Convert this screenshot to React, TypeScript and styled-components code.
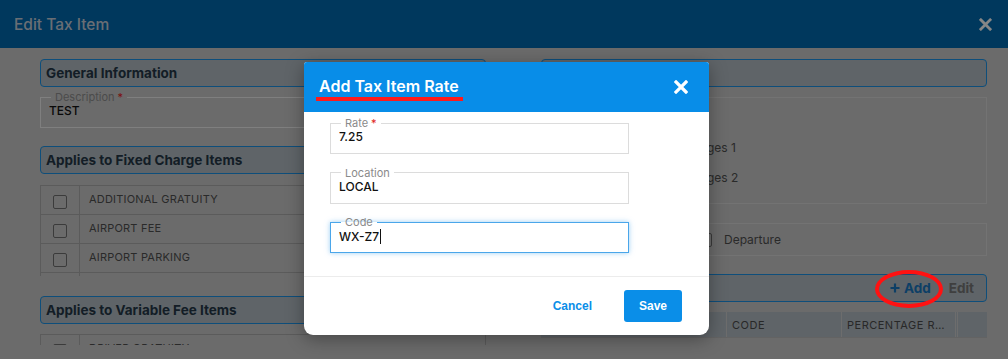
import React from "react";
import styled, { createGlobalStyle } from "styled-components";

const GlobalStyle = createGlobalStyle`
  html, body {
    margin: 0;
    padding: 0;
  }
  body {
    font-family: Inter, "Open Sans", sans-serif;
  }
  * {
    box-sizing: border-box;
  }
`;

const Page = styled.div`
  position: relative;
  width: 1008px;
  height: 359px;
  overflow: hidden;
  background: #c3c3c3;
`;

const TopBar = styled.header`
  height: 48px;
  background: #0066aa;
  display: flex;
  align-items: center;
  justify-content: space-between;
  padding: 0 16px 0 14px;
`;

const TopTitle = styled.h1`
  margin: 0;
  font-size: 15.5px;
  font-weight: 500;
  color: #c0c9d4;
`;

const CloseButton = styled.button<{ $size: number; $color?: string }>`
  border: 0;
  padding: 0;
  background: none;
  display: flex;
  width: ${({ $size }) => $size}px;
  height: ${({ $size }) => $size}px;
  color: ${({ $color }) => $color ?? "#ffffff"};
`;

const Content = styled.main`
  display: grid;
  grid-template-columns: 446px 446px;
  column-gap: 55px;
  padding: 11px 0 0 40px;
  height: 297px;
  overflow: hidden;
`;

const Column = styled.section`
  display: flex;
  flex-direction: column;
`;

const SectionHeader = styled.div<{ $top?: number }>`
  flex: none;
  height: 28px;
  margin-top: ${({ $top }) => $top ?? 0}px;
  border: 1.5px solid #1a8fe0;
  border-radius: 4px;
  background: #adb6bd;
  display: flex;
  align-items: center;
  justify-content: space-between;
  padding: 0 12px 0 5px;
  font-size: 13.5px;
  font-weight: 700;
  color: #243646;
`;

const HeaderActions = styled.div`
  display: flex;
  align-items: center;
  gap: 18px;
`;

const Action = styled.span<{ $primary?: boolean }>`
  display: flex;
  align-items: center;
  gap: 4px;
  font-size: 13.5px;
  font-weight: 700;
  color: ${({ $primary }) => ($primary ? "#1873ba" : "#737373")};
`;

const Field = styled.fieldset<{ $top?: number; $focus?: boolean; $bg?: string }>`
  flex: none;
  margin: ${({ $top }) => $top ?? 0}px 0 0;
  padding: 0 8px;
  height: 37px;
  min-width: 0;
  border: 1px solid ${({ $focus }) => ($focus ? "#4aa6ea" : "#dcdcdc")};
  box-shadow: ${({ $focus }) =>
    $focus ? "0 0 5px rgba(74, 166, 234, 0.55)" : "none"};
  background: ${({ $bg }) => $bg ?? "transparent"};
`;

const Legend = styled.legend`
  padding: 0 4px;
  margin-left: 2px;
  font-size: 11px;
  line-height: 12px;
  color: #8a8a8a;
`;

const Required = styled.span`
  color: #e01b1b;
  margin-left: 3px;
`;

const Value = styled.div`
  display: flex;
  align-items: center;
  font-size: 12px;
  line-height: 14px;
  font-weight: 500;
  color: #111111;
  margin-top: 1px;
`;

const Caret = styled.span`
  display: inline-block;
  width: 1px;
  height: 15px;
  margin-left: 1px;
  background: #111111;
`;

const Table = styled.div<{ $top?: number; $height: number }>`
  flex: none;
  margin-top: ${({ $top }) => $top ?? 0}px;
  height: ${({ $height }) => $height}px;
  overflow: hidden;
  border-left: 1px solid #a6a6a6;
  border-right: 1px solid #a6a6a6;
  border-top: 1px solid #a6a6a6;
`;

const Row = styled.div`
  display: grid;
  grid-template-columns: 39px 1fr;
  height: 29px;
  border-bottom: 1px solid #a6a6a6;
`;

const CheckCell = styled.div`
  display: flex;
  align-items: center;
  justify-content: center;
  border-right: 1px solid #a6a6a6;
  padding-top: 3px;
`;

const TextCell = styled.div`
  display: flex;
  align-items: center;
  padding: 0 0 2px 9px;
  font-size: 11px;
  color: #4e4e4e;
  letter-spacing: 0.2px;
`;

const Checkbox = styled.span`
  display: inline-block;
  flex: none;
  width: 14px;
  height: 14px;
  border: 1.5px solid #6c6c6c;
  border-radius: 2px;
`;

const Box = styled.div<{ $top?: number; $height: number }>`
  flex: none;
  margin-top: ${({ $top }) => $top ?? 0}px;
  height: ${({ $height }) => $height}px;
  border: 1px solid #d2d2d2;
  display: flex;
  flex-direction: column;
`;

const CheckRow = styled.label<{ $indent: number; $height: number }>`
  display: flex;
  align-items: center;
  gap: 12px;
  height: ${({ $height }) => $height}px;
  padding-left: ${({ $indent }) => $indent}px;
  font-size: 12px;
  color: #4e4e4e;
`;

const GridHead = styled.div`
  flex: none;
  margin-top: 10px;
  height: 26px;
  display: grid;
  grid-template-columns: 185px 115px 114px 1fr;
  background: #adb6bd;
  border-bottom: 1px solid #b4b4b4;
`;

const GridCell = styled.div<{ $double?: boolean }>`
  display: flex;
  align-items: center;
  padding: 0 4px 0 5px;
  font-size: 11px;
  letter-spacing: 0.5px;
  color: #4a4a4a;
  border-left: ${({ $double }) => ($double ? "3px double" : "1px solid")} #c6c6c6;
  white-space: nowrap;
  overflow: hidden;

  span {
    overflow: hidden;
    text-overflow: ellipsis;
  }

  &:first-child {
    border-left: 0;
  }
`;

const Overlay = styled.div`
  position: absolute;
  inset: 0;
  background: rgba(0, 0, 0, 0.45);
  z-index: 1;
`;

const Modal = styled.div`
  position: absolute;
  left: 304px;
  top: 62px;
  width: 405px;
  height: 273px;
  z-index: 2;
  background: #ffffff;
  border-radius: 3px 3px 9px 9px;
  box-shadow: 0 4px 18px rgba(0, 0, 0, 0.35);
  overflow: hidden;
  display: flex;
  flex-direction: column;
`;

const ModalHeader = styled.div`
  flex: none;
  height: 50px;
  background: #088de8;
  display: flex;
  align-items: center;
  justify-content: space-between;
  padding: 0 21px 0 12px;
`;

const ModalTitle = styled.h2`
  margin: 3px 0 0;
  padding: 0 4px 1px 3px;
  border-bottom: 4px solid #ff1a1a;
  font-size: 16px;
  line-height: 20px;
  font-weight: 600;
  color: #ffffff;
`;

const ModalBody = styled.div`
  flex: 1;
  display: flex;
  flex-direction: column;
  gap: 12.5px;
  padding: 5px 80px 0 26px;
`;

const ModalFooter = styled.div`
  flex: none;
  height: 59px;
  border-top: 1px solid #ececec;
  display: flex;
  align-items: center;
  justify-content: flex-end;
  gap: 32px;
  padding: 0 27px 0 0;
`;

const TextButton = styled.button`
  border: 0;
  background: none;
  padding: 0;
  font-family: "Liberation Sans", Arial, sans-serif;
  font-size: 12px;
  font-weight: 700;
  color: #0a8ee8;
`;

const PrimaryButton = styled.button`
  width: 58px;
  height: 32px;
  border: 0;
  border-radius: 3px;
  background: #0a8ee8;
  font-family: "Liberation Sans", Arial, sans-serif;
  font-size: 12px;
  font-weight: 700;
  color: #ffffff;
`;

const Highlight = styled.div`
  position: absolute;
  left: 875px;
  top: 270px;
  width: 68px;
  height: 38px;
  border: 4px solid #ff1212;
  border-radius: 50%;
  z-index: 3;
`;

const XIcon = ({ weight = 3 }: { weight?: number }) => (
  <svg viewBox="0 0 14 14" width="100%" height="100%">
    <path
      d="M2 2 L12 12 M12 2 L2 12"
      stroke="currentColor"
      strokeWidth={weight}
      strokeLinecap="square"
    />
  </svg>
);

const PlusIcon = () => (
  <svg viewBox="0 0 10 10" width="10" height="10">
    <path d="M5 0.5 V9.5 M0.5 5 H9.5" stroke="currentColor" strokeWidth="2.2" />
  </svg>
);

const fixedCharges = ["ADDITIONAL GRATUITY", "AIRPORT FEE", "AIRPORT PARKING", "BOOKING FEE"];
const variableFees = ["DRIVER GRATUITY", "FUEL SURCHARGE"];

export default function App() {
  return (
    <Page>
      <GlobalStyle />
      <TopBar>
        <TopTitle>Edit Tax Item</TopTitle>
        <CloseButton $size={13} $color="#f4f4f4">
          <XIcon />
        </CloseButton>
      </TopBar>

      <Content>
        <Column>
          <SectionHeader>General Information</SectionHeader>
          <Field $top={4} style={{ borderColor: "#e8e8e8" }}>
            <Legend>
              Description<Required>*</Required>
            </Legend>
            <Value>TEST</Value>
          </Field>

          <SectionHeader $top={18}>Applies to Fixed Charge Items</SectionHeader>
          <Table $top={11} $height={91}>
            {fixedCharges.map((item) => (
              <Row key={item}>
                <CheckCell>
                  <Checkbox />
                </CheckCell>
                <TextCell>{item}</TextCell>
              </Row>
            ))}
          </Table>

          <SectionHeader $top={20}>Applies to Variable Fee Items</SectionHeader>
          <Table $top={10} $height={60}>
            {variableFees.map((item) => (
              <Row key={item}>
                <CheckCell>
                  <Checkbox />
                </CheckCell>
                <TextCell>{item}</TextCell>
              </Row>
            ))}
          </Table>
        </Column>

        <Column>
          <SectionHeader>Applies To</SectionHeader>
          <Box $top={10} $height={107}>
            <CheckRow $indent={14} $height={34}>Charge Types</CheckRow>
            <CheckRow $indent={77} $height={30}>
              <Checkbox />
              Other Charges 1
            </CheckRow>
            <CheckRow $indent={77} $height={30}>
              <Checkbox />
              Other Charges 2
            </CheckRow>
          </Box>
          <Box $top={19} $height={33}>
            <CheckRow $indent={156} $height={31}>
              <Checkbox />
              Departure
            </CheckRow>
          </Box>
          <SectionHeader $top={18}>
            Tax Item Rates
            <HeaderActions>
              <Action $primary>
                <PlusIcon />
                Add
              </Action>
              <Action>Edit</Action>
            </HeaderActions>
          </SectionHeader>
          <GridHead>
            <GridCell>
              <span>LOCATION</span>
            </GridCell>
            <GridCell>
              <span>CODE</span>
            </GridCell>
            <GridCell>
              <span>PERCENTAGE RATE</span>
            </GridCell>
            <GridCell $double />
          </GridHead>
        </Column>
      </Content>

      <Overlay />
      <Highlight />

      <Modal>
        <ModalHeader>
          <ModalTitle>Add Tax Item Rate</ModalTitle>
          <CloseButton $size={14}>
            <XIcon weight={3.2} />
          </CloseButton>
        </ModalHeader>
        <ModalBody>
          <Field $bg="#fff">
            <Legend>
              Rate<Required>*</Required>
            </Legend>
            <Value>7.25</Value>
          </Field>
          <Field $bg="#fff">
            <Legend>Location</Legend>
            <Value>LOCAL</Value>
          </Field>
          <Field $bg="#fff" $focus>
            <Legend>Code</Legend>
            <Value>
              WX-Z7
              <Caret />
            </Value>
          </Field>
        </ModalBody>
        <ModalFooter>
          <TextButton>Cancel</TextButton>
          <PrimaryButton>Save</PrimaryButton>
        </ModalFooter>
      </Modal>
    </Page>
  );
}
